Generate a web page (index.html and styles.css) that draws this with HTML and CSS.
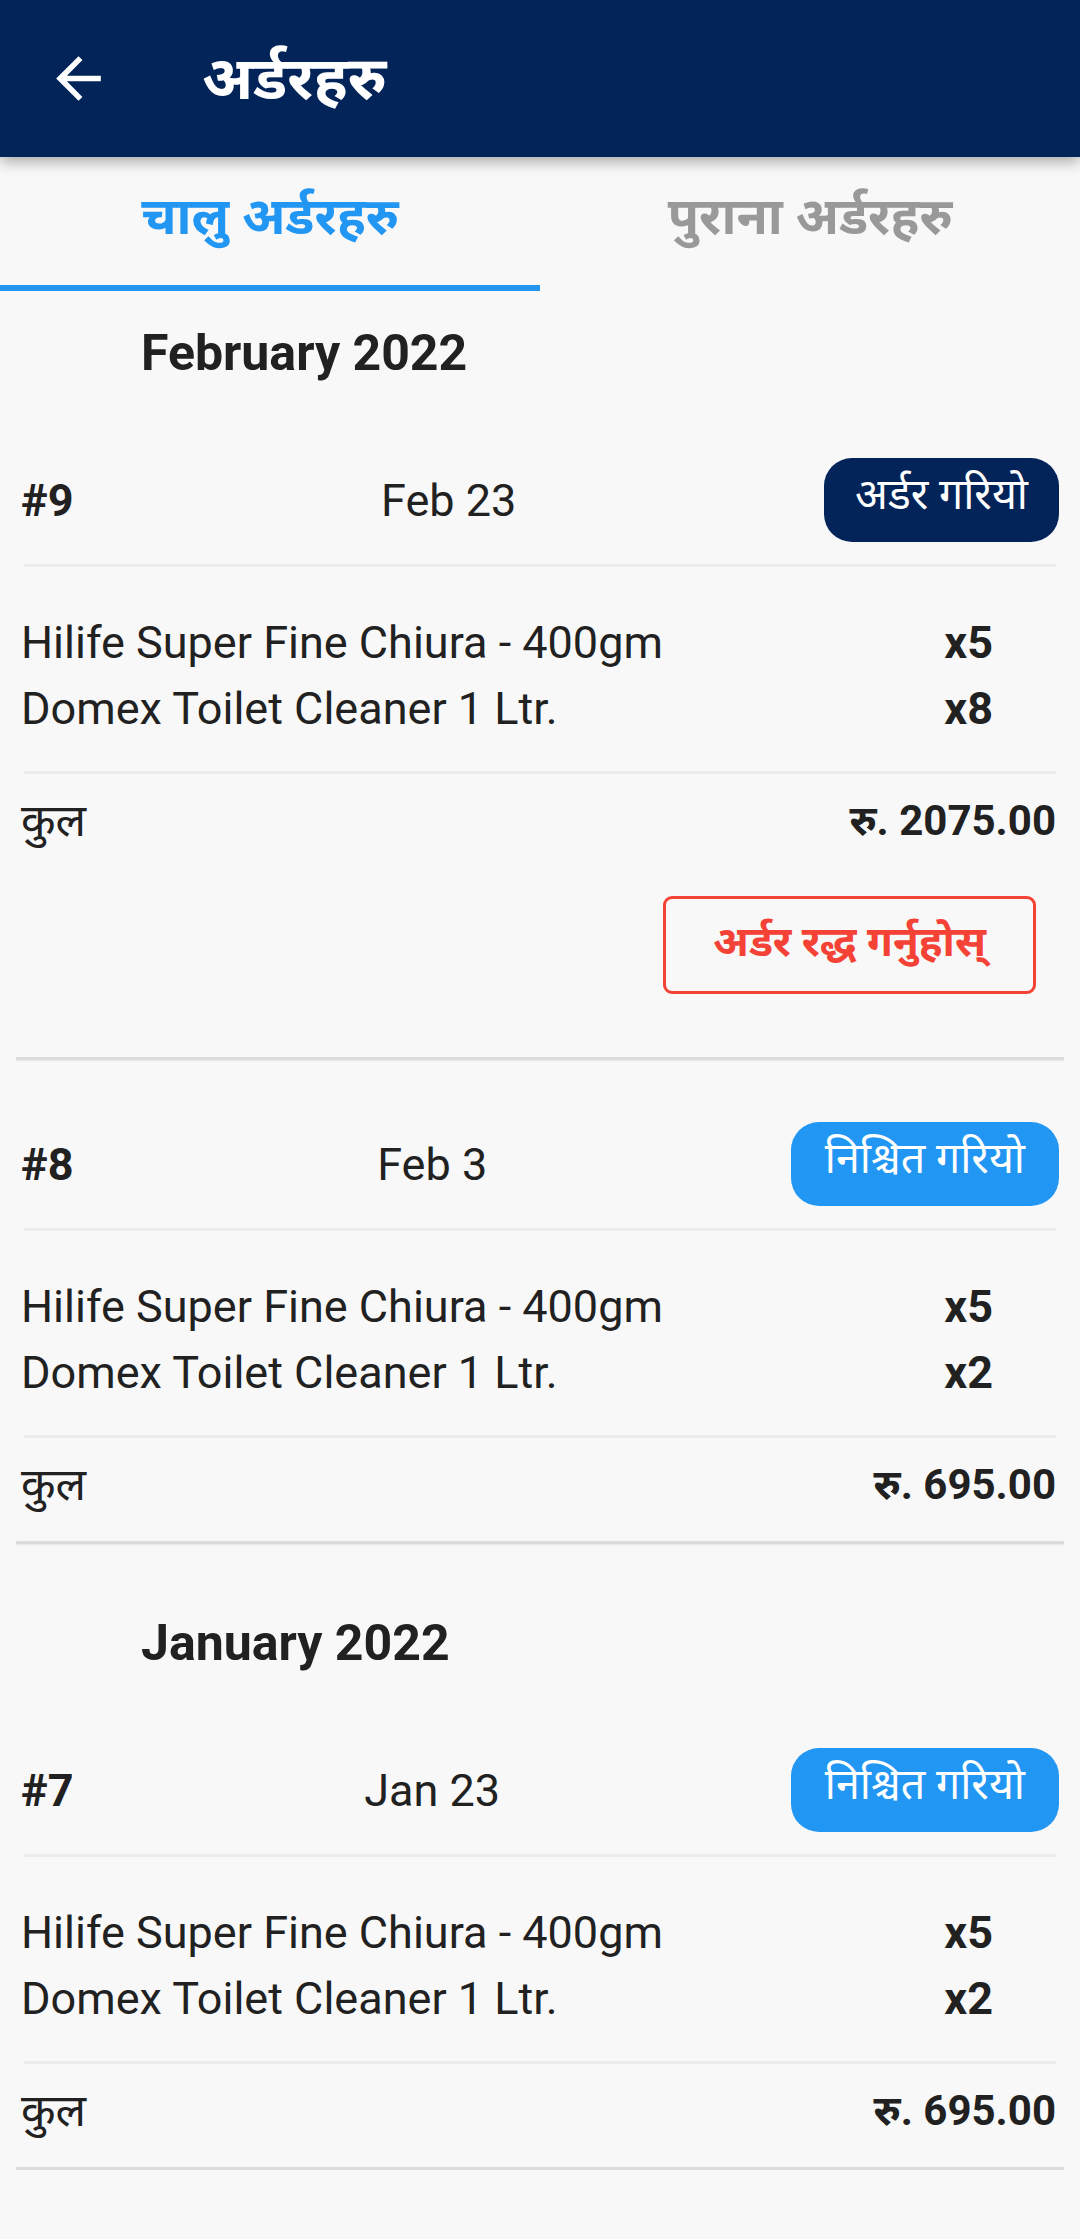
FILE: index.html
```html
<!DOCTYPE html>
<html lang="ne">
<head>
  <meta charset="UTF-8">
  <meta name="viewport" content="width=device-width, initial-scale=1.0">
  <title>अर्डरहरु</title>
  <link rel="stylesheet" href="styles.css">
</head>
<body>

<header class="appbar">
  <svg class="back" viewBox="0 0 24 24" width="67" height="67">
    <path d="M20 11H7.83l5.59-5.59L12 4l-8 8 8 8 1.41-1.41L7.83 13H20v-2z" fill="#fff"/>
  </svg>
  <h1>अर्डरहरु</h1>
</header>

<nav class="tabs">
  <div class="tab active">चालु अर्डरहरु</div>
  <div class="tab">पुराना अर्डरहरु</div>
</nav>

<main class="orders">

  <section class="month">
    <h2>February 2022</h2>

    <div class="order">
      <div class="order-head">
        <span class="order-no">#9</span>
        <span class="order-date">Feb 23</span>
        <span class="badge badge-ordered">अर्डर गरियो</span>
      </div>
      <div class="divider"></div>
      <div class="items">
        <div class="item"><span>Hilife Super Fine Chiura - 400gm</span><b>x5</b></div>
        <div class="item"><span>Domex Toilet Cleaner 1 Ltr.</span><b>x8</b></div>
      </div>
      <div class="divider"></div>
      <div class="total"><span>कुल</span><b>रु. 2075.00</b></div>
      <button class="cancel">अर्डर रद्ध गर्नुहोस्</button>
      <div class="card-end"></div>
    </div>

    <div class="order">
      <div class="order-head">
        <span class="order-no">#8</span>
        <span class="order-date">Feb 3</span>
        <span class="badge badge-confirmed">निश्चित गरियो</span>
      </div>
      <div class="divider"></div>
      <div class="items">
        <div class="item"><span>Hilife Super Fine Chiura - 400gm</span><b>x5</b></div>
        <div class="item"><span>Domex Toilet Cleaner 1 Ltr.</span><b>x2</b></div>
      </div>
      <div class="divider"></div>
      <div class="total"><span>कुल</span><b>रु. 695.00</b></div>
      <div class="card-end"></div>
    </div>
  </section>

  <section class="month">
    <h2>January 2022</h2>

    <div class="order">
      <div class="order-head">
        <span class="order-no">#7</span>
        <span class="order-date">Jan 23</span>
        <span class="badge badge-confirmed">निश्चित गरियो</span>
      </div>
      <div class="divider"></div>
      <div class="items">
        <div class="item"><span>Hilife Super Fine Chiura - 400gm</span><b>x5</b></div>
        <div class="item"><span>Domex Toilet Cleaner 1 Ltr.</span><b>x2</b></div>
      </div>
      <div class="divider"></div>
      <div class="total"><span>कुल</span><b>रु. 695.00</b></div>
      <div class="card-end"></div>
    </div>
  </section>

</main>

</body>
</html>
```

FILE: styles.css
```css
body {
  margin: 0;
  padding: 0;
  background-color: #f8f8f8;
  color: #212121;
  font-family: Roboto, "Noto Sans Devanagari", "Lohit Devanagari", "Noto Sans", sans-serif;
}
.appbar {
  position: relative;
  z-index: 2;
  height: 157px;
  display: flex;
  align-items: center;
  background-color: #032459;
  box-shadow: 0 4px 14px rgba(0, 0, 0, 0.35);
}
.back {
  margin-left: 45px;
  flex-shrink: 0;
}
.appbar h1 {
  margin: 0 0 0 90px;
  color: #fff;
  font-size: 60px;
  font-weight: bold;
  line-height: 1;
}
.tabs {
  display: flex;
  height: 134px;
}
.tab {
  flex: 1;
  display: flex;
  align-items: center;
  justify-content: center;
  border-bottom: 6px solid transparent;
  color: #999;
  font-size: 51px;
  font-weight: bold;
}
.tab.active {
  color: #2196f3;
  border-bottom-color: #2196f3;
}
.orders {
  padding: 0 21px;
}
.month {
  padding-top: 32px;
}
.month + .month {
  margin-top: 37px;
}
.month h2 {
  margin: 0 0 13px 120px;
  font-size: 50px;
  line-height: 60px;
  font-weight: bold;
}
.order {
  padding-top: 62px;
}
.order-head {
  height: 84px;
  display: flex;
  align-items: center;
  justify-content: space-between;
  font-size: 45px;
}
.order-no {
  font-weight: bold;
}
.badge {
  height: 84px;
  box-sizing: border-box;
  padding: 0 31px 4px;
  display: flex;
  align-items: center;
  border-radius: 28px;
  color: #fff;
  font-size: 43px;
}
.badge-ordered {
  background-color: #032459;
}
.badge-confirmed {
  padding: 0 34px 4px;
  background-color: #2196f3;
}
.divider {
  height: 3px;
  margin: 22px 3px 0;
  background-color: #ececec;
}
.items {
  padding: 43px 0 29px;
}
.items + .divider {
  margin-top: 0;
}
.item {
  display: flex;
  justify-content: space-between;
  font-size: 45px;
  line-height: 66px;
}
.item b {
  margin-right: 66px;
}
.total {
  display: flex;
  justify-content: space-between;
  padding: 17px 3px 26px 0;
  font-size: 45px;
  line-height: 60px;
}
.total b {
  font-size: 42px;
}
.cancel {
  display: block;
  width: 373px;
  height: 98px;
  margin: 19px 23px 63px auto;
  background: transparent;
  border: 3px solid #f44336;
  border-radius: 9px;
  color: #f44336;
  font-family: inherit;
  font-size: 42px;
  font-weight: bold;
}
.card-end {
  height: 3px;
  margin: 0 -5px;
  background-color: #dcdcdc;
  box-shadow: 0 1px 2px rgba(0, 0, 0, 0.08);
}
```
